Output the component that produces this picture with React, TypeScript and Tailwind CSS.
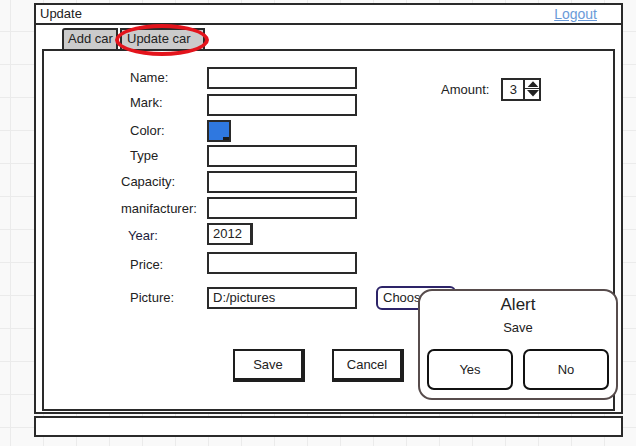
import React from 'react'

const Field = ({ label, pl, mt, children }: { label: string; pl: string; mt: string; children: React.ReactNode }) => {
    return (
        <div className={`flex items-center h-[22px] ${mt}`}>
            <div className={`w-[89px] shrink-0 text-[13px] ${pl}`}>{label}</div>
            {children}
        </div>
    )
}

const Input = ({ value, w = 'w-[150px]' }: { value?: string; w?: string }) => (
    <div className={`${w} h-[22px] shrink-0 border-2 border-[#2a2a2a] bg-white px-[4px] text-[13px] leading-[18px]`}>
        {value}
    </div>
)

const App = () => {
    return (
        <div className="relative w-[636px] h-[446px] overflow-hidden bg-[#f9f9f9] bg-[linear-gradient(to_right,#ebebeb_1px,transparent_1px),linear-gradient(to_bottom,#ebebeb_1px,transparent_1px)] bg-[size:33px_33px] bg-[position:10px_-2px] font-['Liberation_Sans',Arial,sans-serif] text-[#222]">
            <div className="ml-[34px] pt-[3px] w-[589px]">
                {/* title bar */}
                <div className="h-[22px] border-2 border-[#2a2a2a] bg-white flex items-center justify-between pl-[4px] pr-[24px] text-[13px]">
                    <span>Update</span>
                    <span className="text-[#6a9ad8] underline text-[14px]">Logout</span>
                </div>

                {/* window body */}
                <div className="h-[389px] border-x-2 border-b-2 border-[#2a2a2a] bg-white">
                    <div className="flex pl-[26px] pt-[3px] gap-[2px]">
                        <div className="w-[56px] h-[21px] border-2 border-b-0 border-[#2a2a2a] rounded-tl-[3px] bg-[#cbcbcb] pl-[4px] text-[13px] leading-[18px]">
                            Add car
                        </div>
                        <div className="relative w-[85px] h-[21px] border-2 border-b-0 border-[#2a2a2a] bg-[#cbcbcb] pl-[5px] text-[13px] leading-[18px]">
                            Update car
                            <div className="absolute left-[-7px] top-[-6px] w-[94px] h-[32px] border-[4px] border-[#e3141c] rounded-[50%]" />
                        </div>
                    </div>

                    <div className="ml-[6px] mr-[6px] h-[362px] border-2 border-[#2a2a2a]">
                        <div className="flex pt-[16px]">
                            <div className="w-[313px] shrink-0 pl-[74px]">
                                <Field label="Name:" pl="pl-[12px]" mt="">
                                    <Input />
                                </Field>
                                <Field label="Mark:" pl="pl-[12px] pb-[4px]" mt="mt-[5px]">
                                    <Input />
                                </Field>
                                <Field label="Color:" pl="pl-[12px]" mt="mt-[4px]">
                                    <div className="relative w-[24px] h-[22px] border-2 border-[#2a2a2a] bg-[#2f78e0]">
                                        <div className="absolute right-0 bottom-0 w-[6px] h-[3px] bg-[#1b1b1b]" />
                                    </div>
                                </Field>
                                <Field label="Type" pl="pl-[12px]" mt="mt-[3px]">
                                    <Input />
                                </Field>
                                <Field label="Capacity:" pl="pl-[3px]" mt="mt-[4px]">
                                    <Input />
                                </Field>
                                <Field label="manifacturer:" pl="pl-[3px] pt-[2px]" mt="mt-[4px]">
                                    <Input />
                                </Field>
                                <Field label="Year:" pl="pl-[10px] pt-[4px] text-[#1c1c3e]" mt="mt-[4px]">
                                    <div className="w-[46px] h-[22px] shrink-0 border-2 border-r-[3px] border-[#2a2a2a] px-[4px] text-[13px] leading-[18px]">2012</div>
                                </Field>
                                <Field label="Price:" pl="pl-[12px] pt-[4px]" mt="mt-[7px]">
                                    <Input />
                                </Field>
                                <Field label="Picture:" pl="pl-[12px]" mt="mt-[13px]">
                                    <Input value="D:/pictures" />
                                    <div className="ml-[19px] shrink-0 h-[24px] w-[80px] border-2 border-[#2d2468] rounded-[6px] pl-[5px] text-[13px] leading-[20px]">
                                        Choose...
                                    </div>
                                </Field>
                            </div>

                            <div className="ml-[84px] mt-[11px] flex items-center h-[23px] gap-[12px]">
                                <span className="text-[13px]">Amount:</span>
                                <div className="flex w-[40px] h-[23px] border-2 border-[#2a2a2a]">
                                    <div className="w-[20px] text-center text-[13px] leading-[19px]">3</div>
                                    <div className="flex flex-col border-l-2 border-[#2a2a2a] w-[16px]">
                                        <svg width="16" height="9" viewBox="0 0 16 9" className="border-b border-[#2a2a2a]">
                                            <path d="M2 8 L8 1.5 L14 8 Z" fill="#222" />
                                        </svg>
                                        <svg width="16" height="9" viewBox="0 0 16 9">
                                            <path d="M2 1 L8 7.5 L14 1 Z" fill="#222" />
                                        </svg>
                                    </div>
                                </div>
                            </div>
                        </div>

                        <div className="flex mt-[40px] pl-[189px] gap-[27px]">
                            <div className="w-[72px] h-[33px] border-2 border-r-[4px] border-b-[4px] border-[#1e1e1e] flex items-center justify-center text-[13px]">
                                Save
                            </div>
                            <div className="w-[72px] h-[33px] border-2 border-r-[4px] border-b-[4px] border-[#1e1e1e] flex items-center justify-center text-[13px]">
                                Cancel
                            </div>
                        </div>
                    </div>
                </div>

                {/* status bar */}
                <div className="mt-[2px] h-[21px] border-2 border-[#2a2a2a] bg-white" />
            </div>

            {/* alert popup */}
            <div className="absolute left-[418px] top-[289px] w-[200px] h-[111px] border-2 border-[#574c4c] rounded-[14px] bg-white flex flex-col items-center">
                <div className="text-[17px] mt-[3px] leading-[22px]">Alert</div>
                <div className="text-[13px] mt-[4px] leading-[16px]">Save</div>
                <div className="flex gap-[10px] mt-[13px]">
                    <div className="w-[86px] h-[41px] border-2 border-[#111] rounded-[7px] flex items-center justify-center text-[13px]">Yes</div>
                    <div className="w-[86px] h-[41px] border-2 border-[#111] rounded-[7px] flex items-center justify-center text-[13px]">No</div>
                </div>
            </div>
        </div>
    )
}

export default App
